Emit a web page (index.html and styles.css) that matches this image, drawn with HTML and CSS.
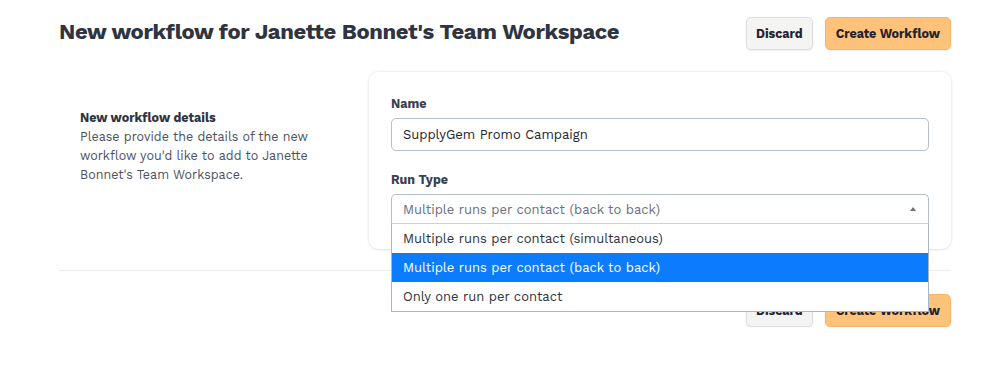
FILE: index.html
```html
<!DOCTYPE html>
<html>
<head>
<meta charset="utf-8">
<link rel="stylesheet" href="styles.css">
</head>
<body>
<div class="page">
  <header class="top">
    <h1 class="title">New workflow for Janette Bonnet's Team Workspace</h1>
    <div class="actions">
      <button class="btn btn-secondary">Discard</button>
      <button class="btn btn-primary">Create Workflow</button>
    </div>
  </header>
  <section class="form-row">
    <div class="intro">
      <h2 class="intro-title">New workflow details</h2>
      <p class="intro-text">Please provide the details of the new workflow you'd like to add to Janette Bonnet's Team Workspace.</p>
    </div>
    <div class="card">
      <div class="field">
        <label class="label">Name</label>
        <div class="input">SupplyGem Promo Campaign</div>
      </div>
      <div class="field field-run">
        <label class="label">Run Type</label>
        <div class="select-wrap">
          <div class="select">
            <span>Multiple runs per contact (back to back)</span>
            <span class="caret"></span>
          </div>
          <ul class="menu">
            <li class="opt">Multiple runs per contact (simultaneous)</li>
            <li class="opt opt-active">Multiple runs per contact (back to back)</li>
            <li class="opt">Only one run per contact</li>
          </ul>
        </div>
      </div>
    </div>
  </section>
  <hr class="divider">
  <footer class="bottom">
    <button class="btn btn-secondary">Discard</button>
    <button class="btn btn-primary">Create Workflow</button>
  </footer>
</div>
</body>
</html>
```
FILE: styles.css
```css
* { box-sizing: border-box; }
body {
  margin: 0;
  background: #fff;
  font-family: "Work Sans", "Open Sans", "Noto Sans", sans-serif;
  color: #2d3748;
}
.page {
  padding: 17px 35px 0 59px;
}
.top {
  display: flex;
  justify-content: space-between;
  align-items: flex-start;
}
.title {
  margin: 1px 0 0 0;
  font-size: 22px;
  font-weight: 700;
  color: #2f3441;
  letter-spacing: -0.35px;
  line-height: 28px;
}
.actions, .bottom {
  display: flex;
  gap: 12px;
}
.bottom {
  justify-content: flex-end;
  margin-top: 23px;
}
.btn {
  height: 33px;
  border-radius: 5px;
  font-family: inherit;
  font-size: 12.5px;
  font-weight: 700;
  color: #1f2430;
  padding: 0 10px;
  cursor: pointer;
}
.btn-secondary {
  background: #f4f4f3;
  border: 1px solid #dedede;
  box-shadow: 0 1px 2px rgba(0,0,0,0.08);
  padding: 0 9px;
}
.btn-primary {
  background: #ffc27b;
  border: 1px solid #f8b564;
  box-shadow: 0 1px 2px rgba(0,0,0,0.08);
}
.form-row {
  display: flex;
  margin-top: 22px;
}
.intro {
  width: 310px;
  padding: 37px 0 0 21px;
}
.intro-title {
  margin: 0;
  font-size: 12.5px;
  font-weight: 700;
  color: #2f3441;
  line-height: 17px;
}
.intro-text {
  margin: 1px 0 0 0;
  font-size: 12.5px;
  color: #4b5161;
  line-height: 19px;
  width: 240px;
}
.card {
  flex: 1;
  margin-left: 0;
  background: #fff;
  border-radius: 9px;
  box-shadow: 0 0 3px rgba(0,0,0,0.12), 0 1px 3px rgba(0,0,0,0.06);
  padding: 23px 22px 25px 22px;
}
.label {
  display: block;
  font-size: 12.5px;
  font-weight: 700;
  color: #3a4050;
  line-height: 17px;
  margin-bottom: 6px;
}
.input {
  height: 33px;
  border: 1px solid #b4c0cc;
  border-radius: 5px;
  padding: 0 11px;
  display: flex;
  align-items: center;
  font-size: 13px;
  color: #22262f;
}
.field-run {
  margin-top: 20px;
}
.select-wrap {
  position: relative;
}
.select {
  height: 30px;
  border: 1px solid #b4c0cc;
  border-bottom-color: #c8d2dc;
  border-radius: 5px 5px 0 0;
  padding: 0 11px;
  display: flex;
  align-items: center;
  justify-content: space-between;
  font-size: 13px;
  color: #6a7080;
}
.caret {
  width: 0;
  height: 0;
  border-left: 3.5px solid transparent;
  border-right: 3.5px solid transparent;
  border-bottom: 4px solid #707070;
  margin-right: 1px;
}
.menu {
  position: absolute;
  left: 0;
  right: 0;
  top: 30px;
  margin: 0;
  padding: 0;
  list-style: none;
  background: #fff;
  border: 1px solid #aab6c2;
  border-top: none;
  z-index: 5;
}
.opt {
  height: 29px;
  display: flex;
  align-items: center;
  padding: 0 11px;
  font-size: 13px;
  color: #2e3340;
}
.opt-active {
  background: #0a7cfd;
  color: #fff;
}
.divider {
  margin: 21px 0 0 0;
  border: none;
  border-top: 1px solid #ececec;
}
```
